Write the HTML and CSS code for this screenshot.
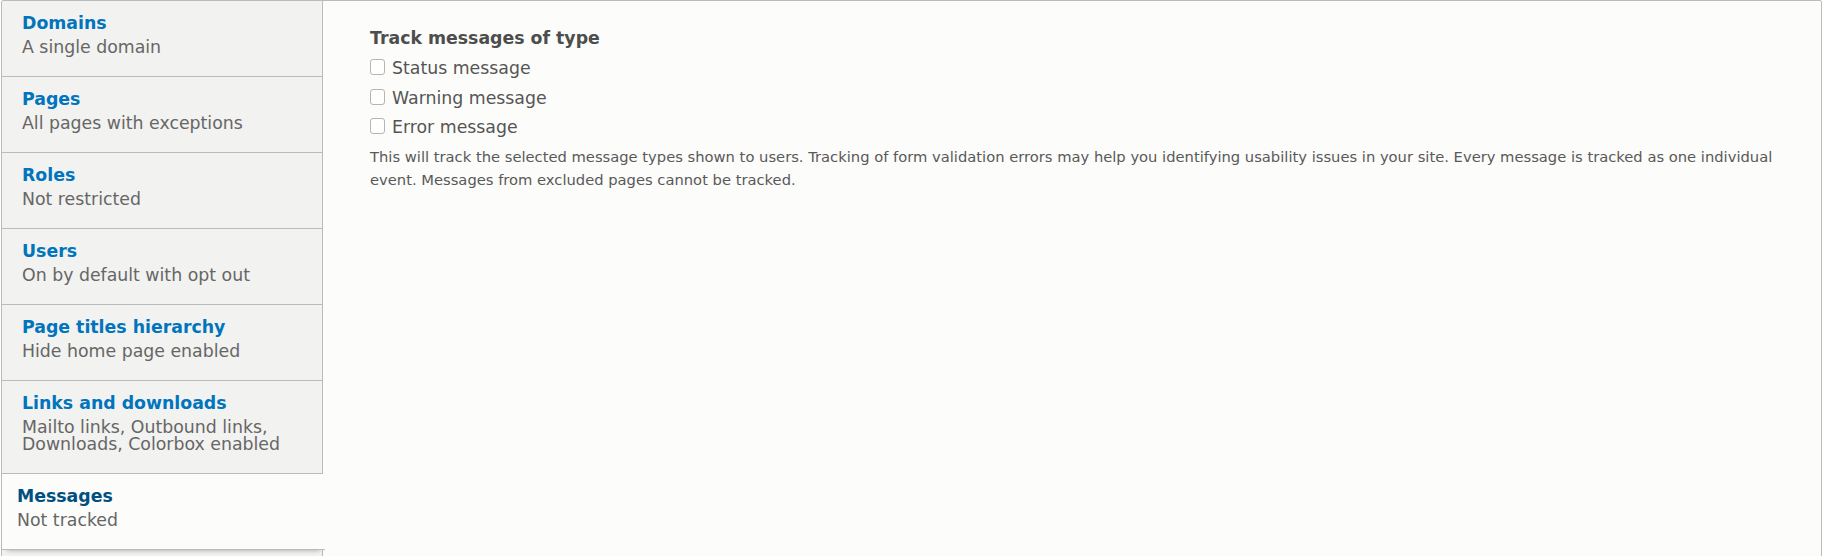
FILE: index.html
```html
<!DOCTYPE html>
<html>
<head>
	<title>Messages</title>
	<link rel="stylesheet" href="styles.css">
</head>
<body>
	<div class="page">
		<div class="vtabs">
			<ul class="vtabs-menu">
				<li class="vtabs-item">
					<a href="#domains"><strong class="vtabs-title">Domains</strong><span class="vtabs-summary">A single domain</span></a>
				</li>
				<li class="vtabs-item">
					<a href="#pages"><strong class="vtabs-title">Pages</strong><span class="vtabs-summary">All pages with exceptions</span></a>
				</li>
				<li class="vtabs-item">
					<a href="#roles"><strong class="vtabs-title">Roles</strong><span class="vtabs-summary">Not restricted</span></a>
				</li>
				<li class="vtabs-item">
					<a href="#users"><strong class="vtabs-title">Users</strong><span class="vtabs-summary">On by default with opt out</span></a>
				</li>
				<li class="vtabs-item">
					<a href="#titles"><strong class="vtabs-title">Page titles hierarchy</strong><span class="vtabs-summary">Hide home page enabled</span></a>
				</li>
				<li class="vtabs-item">
					<a href="#links"><strong class="vtabs-title">Links and downloads</strong><span class="vtabs-summary">Mailto links, Outbound links,<br>Downloads, Colorbox enabled</span></a>
				</li>
				<li class="vtabs-item is-selected">
					<a href="#messages"><strong class="vtabs-title">Messages</strong><span class="vtabs-summary">Not tracked</span></a>
				</li>
				<li class="vtabs-item vtabs-item-empty"></li>
			</ul>
			<div class="vtabs-pane">
				<fieldset class="checkboxes">
					<legend class="field-label">Track messages of type</legend>
					<div class="check-item">
						<input type="checkbox" id="msg-status">
						<label for="msg-status">Status message</label>
					</div>
					<div class="check-item">
						<input type="checkbox" id="msg-warning">
						<label for="msg-warning">Warning message</label>
					</div>
					<div class="check-item">
						<input type="checkbox" id="msg-error">
						<label for="msg-error">Error message</label>
					</div>
					<div class="description">This will track the selected message types shown to users. Tracking of form validation errors may help you identifying usability issues in your site. Every message is tracked as one individual event. Messages from excluded pages cannot be tracked.</div>
				</fieldset>
			</div>
		</div>
	</div>
</body>
</html>
```

FILE: styles.css
```css
html, body {
	margin: 0;
	padding: 0;
}
body {
	height: 556px;
	overflow: hidden;
	background-color: #FFF;
	font-family: "DejaVu Sans", Verdana, sans-serif;
	font-size: 17.333px;
	color: #555;
}
.page {
	padding-left: 1px;
}
.vtabs {
	display: flex;
	border: 1px solid #bbb;
	border-radius: 2px;
	background-color: #fcfcfa;
	min-height: 600px;
}
.vtabs-menu {
	list-style: none;
	margin: 0;
	padding: 0;
	width: 320px;
	flex-shrink: 0;
	background-color: #f2f2f0;
	border-right: 1px solid #bbb;
}
.vtabs-item {
	border-bottom: 1px solid #bbb;
}
.vtabs-item-empty {
	height: 75px;
}
.vtabs-item a {
	display: block;
	padding: 13px 20px 20px 20px;
	text-decoration: none;
}
.vtabs-title {
	display: block;
	line-height: 18px;
	color: #0074bd;
	font-weight: bold;
}
.vtabs-summary {
	display: block;
	margin-top: 7px;
	line-height: 17px;
	color: #666;
}
.vtabs-item.is-selected {
	position: relative;
	margin-right: -3px;
	background-color: #fcfcfa;
	box-shadow: 0 5px 5px -5px rgba(0, 0, 0, 0.35);
}
.vtabs-item.is-selected a {
	padding-left: 15px;
}
.vtabs-item.is-selected .vtabs-title {
	color: #004f80;
}
.vtabs-pane {
	flex: 1;
	padding: 24px 47px;
}
.checkboxes {
	border: 0;
	margin: 0;
	padding: 0;
	min-width: 0;
}
.field-label {
	display: block;
	padding: 0;
	margin-bottom: 3px;
	line-height: 26px;
	font-weight: bold;
	color: #4d4d4d;
}
.check-item {
	display: flex;
	align-items: flex-start;
	line-height: 29.6px;
}
.check-item input {
	appearance: none;
	-webkit-appearance: none;
	box-sizing: border-box;
	width: 15px;
	height: 16px;
	margin: 5px 7px 0 0;
	border: 1px solid #b8b4b0;
	border-radius: 3px;
	background-color: #FFF;
}
.description {
	margin-top: 2px;
	font-size: 14.733px;
	line-height: 23px;
	color: #595959;
}
```
